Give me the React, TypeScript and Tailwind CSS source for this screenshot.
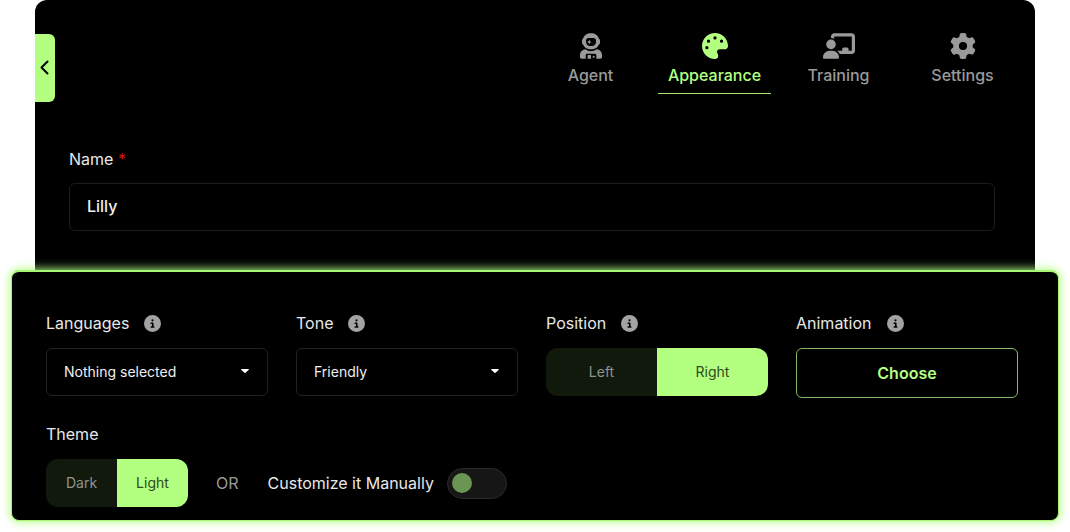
import { useState, type ReactNode } from "react";
import { FaChalkboardUser, FaCircleInfo, FaGear, FaPalette } from "react-icons/fa6";

function AstronautIcon({ className }: { className?: string }) {
  return (
    <svg viewBox="0 0 68 78" className={className} fill="currentColor" aria-hidden="true">
      <path
        fillRule="evenodd"
        d="M34 1c12 0 21 6 24 17 2 0 3 1 3 3v10c0 2-1 3-3 3-3 9-12 15-24 15S13 43 10 34c-2 0-3-1-3-3V21c0-2 1-3 3-3C13 7 22 1 34 1zM27 15c-5 0-8 3-8 8v4c0 7 5 12 12 12h6c7 0 12-5 12-12v-4c0-5-3-8-8-8z"
      />
      <path d="M29 20l2 5 5 2-5 2-2 5-2-5-5-2 5-2z" />
      <path d="M17 49c5 4 11 6 17 6s12-2 17-6c9 1 16 8 16 17v6c0 3-2 5-5 5H50V67c0-3-2-5-5-5H23c-3 0-5 2-5 5v10H6c-3 0-5-2-5-5v-6c0-9 7-16 16-17z" />
      <path d="M26 66h6c1 0 2 1 2 2v9H24v-9c0-1 1-2 2-2z" />
      <circle cx="42" cy="71" r="3" />
    </svg>
  );
}

const tabs = [
  { name: "Agent", Icon: AstronautIcon },
  { name: "Appearance", Icon: FaPalette },
  { name: "Training", Icon: FaChalkboardUser },
  { name: "Settings", Icon: FaGear },
];

function InfoButton({ topic }: { topic: string }) {
  return (
    <button type="button" aria-label={`About ${topic}`} className="text-[#a3a3a3]">
      <FaCircleInfo className="size-[17px]" />
    </button>
  );
}

function FieldLabel({ topic, htmlFor, id }: { topic: string; htmlFor?: string; id?: string }) {
  return (
    <div className="flex h-6 items-center gap-[15px]">
      {htmlFor ? <label htmlFor={htmlFor}>{topic}</label> : <span id={id}>{topic}</span>}
      <InfoButton topic={topic} />
    </div>
  );
}

function SelectField({ id, label, options }: { id: string; label: string; options: string[] }) {
  return (
    <div>
      <FieldLabel topic={label} htmlFor={id} />
      <div className="relative mt-[13px]">
        <select
          id={id}
          className="h-12 w-full appearance-none rounded-md border border-[#222222] bg-black px-[17px] text-sm text-[#f0f0f0] outline-none"
        >
          {options.map((option) => (
            <option key={option}>{option}</option>
          ))}
        </select>
        <svg
          viewBox="0 0 10 6"
          className="pointer-events-none absolute top-5 right-[18px] h-1.5 w-2.5 fill-white"
          aria-hidden="true"
        >
          <path d="M1.8 1h6.4c.6 0 .8.5.4.9L5.5 4.8c-.3.3-.7.3-1 0L1.4 1.9c-.4-.4-.2-.9.4-.9z" />
        </svg>
      </div>
    </div>
  );
}

function Segmented({
  options,
  initial,
  labelledBy,
  className,
}: {
  options: string[];
  initial: string;
  labelledBy: string;
  className: string;
}) {
  const [value, setValue] = useState(initial);
  return (
    <div
      role="group"
      aria-labelledby={labelledBy}
      className={`grid h-12 grid-cols-2 overflow-hidden rounded-xl text-sm ${className}`}
    >
      {options.map((option) => (
        <button
          key={option}
          type="button"
          aria-pressed={value === option}
          onClick={() => setValue(option)}
          className={
            value === option ? "bg-[#b3ff80] text-[#2f4a20]" : "bg-[#11190d] text-[#8f938d]"
          }
        >
          {option}
        </button>
      ))}
    </div>
  );
}

function Panel({ children, className }: { children: ReactNode; className: string }) {
  return <section className={`bg-black text-[#e8e8e8] ${className}`}>{children}</section>;
}

export default function App() {
  const [active, setActive] = useState("Appearance");

  return (
    <main className="bg-white pb-[11px] font-['Inter',sans-serif] text-[16px] leading-6">
      <Panel className="mx-[35px] rounded-t-xl pb-[39px]">
        <header className="flex items-start justify-between pt-[25px] pr-4">
          <button
            type="button"
            aria-label="Collapse panel"
            className="mt-[9px] flex h-[68px] w-5 items-center justify-center rounded-r-md bg-[#b3ff80] text-black"
          >
            <svg
              viewBox="0 0 10 16"
              className="h-4 w-2.5 fill-none stroke-current stroke-2"
              strokeLinecap="round"
              strokeLinejoin="round"
            >
              <path d="M7.5 1.5 1.5 7.5l6 6" />
            </svg>
          </button>
          <nav className="flex gap-[11px]">
            {tabs.map(({ name, Icon }) => (
              <button
                key={name}
                type="button"
                onClick={() => setActive(name)}
                aria-current={active === name ? "page" : undefined}
                className={`flex h-[69px] w-[113px] flex-col items-center border-b pt-2 font-medium ${
                  active === name
                    ? "border-[#9fe373] text-[#b3ff80]"
                    : "border-transparent text-[#9a9a9a]"
                }`}
              >
                <Icon className="h-[26px] w-8" />
                <span className="mt-1">{name}</span>
              </button>
            ))}
          </nav>
        </header>
        <div className="mt-[45px] mr-10 ml-[34px]">
          <label htmlFor="name" className="block">
            Name <span className="text-[#d01818]">*</span>
          </label>
          <input
            id="name"
            required
            defaultValue="Lilly"
            className="mt-3 block h-12 w-full rounded-md border border-[#1c1c1c] bg-black px-[17px] pb-0.5 font-medium text-[#f0f0f0] outline-none"
          />
        </div>
      </Panel>

      <Panel className="relative mx-[11px] rounded-lg border border-t-2 border-[#a6f573] pt-[39px] pr-10 pb-[13px] pl-[34px] shadow-[0_0_10px_1px_#b3ff80]">
        <div className="grid grid-cols-4 gap-x-7">
          <SelectField
            id="languages"
            label="Languages"
            options={["Nothing selected", "English", "French", "German"]}
          />
          <SelectField id="tone" label="Tone" options={["Friendly", "Formal", "Casual"]} />
          <div>
            <FieldLabel topic="Position" id="position" />
            <Segmented
              options={["Left", "Right"]}
              initial="Right"
              labelledBy="position"
              className="mt-[13px]"
            />
          </div>
          <div>
            <FieldLabel topic="Animation" id="animation" />
            <button
              type="button"
              className="mt-[13px] h-[50px] w-full rounded-md border border-[#87b968] font-semibold text-[#b3ff80]"
            >
              Choose
            </button>
          </div>
        </div>

        <div id="theme" className="mt-6">
          Theme
        </div>
        <div className="mt-[13px] flex items-center">
          <Segmented
            options={["Dark", "Light"]}
            initial="Light"
            labelledBy="theme"
            className="w-[142px]"
          />
          <span className="ml-7 text-[#9a9a9a]">OR</span>
          <label htmlFor="customize" className="ml-[29px]">
            Customize it Manually
          </label>
          <input
            id="customize"
            type="checkbox"
            role="switch"
            className="ml-[13px] flex h-[31px] w-[60px] appearance-none items-center rounded-full border border-[#2b2b2b] bg-[#161616] px-1 before:size-5 before:rounded-full before:bg-[#6a9552] checked:justify-end checked:before:bg-[#b3ff80]"
          />
        </div>
      </Panel>
    </main>
  );
}
